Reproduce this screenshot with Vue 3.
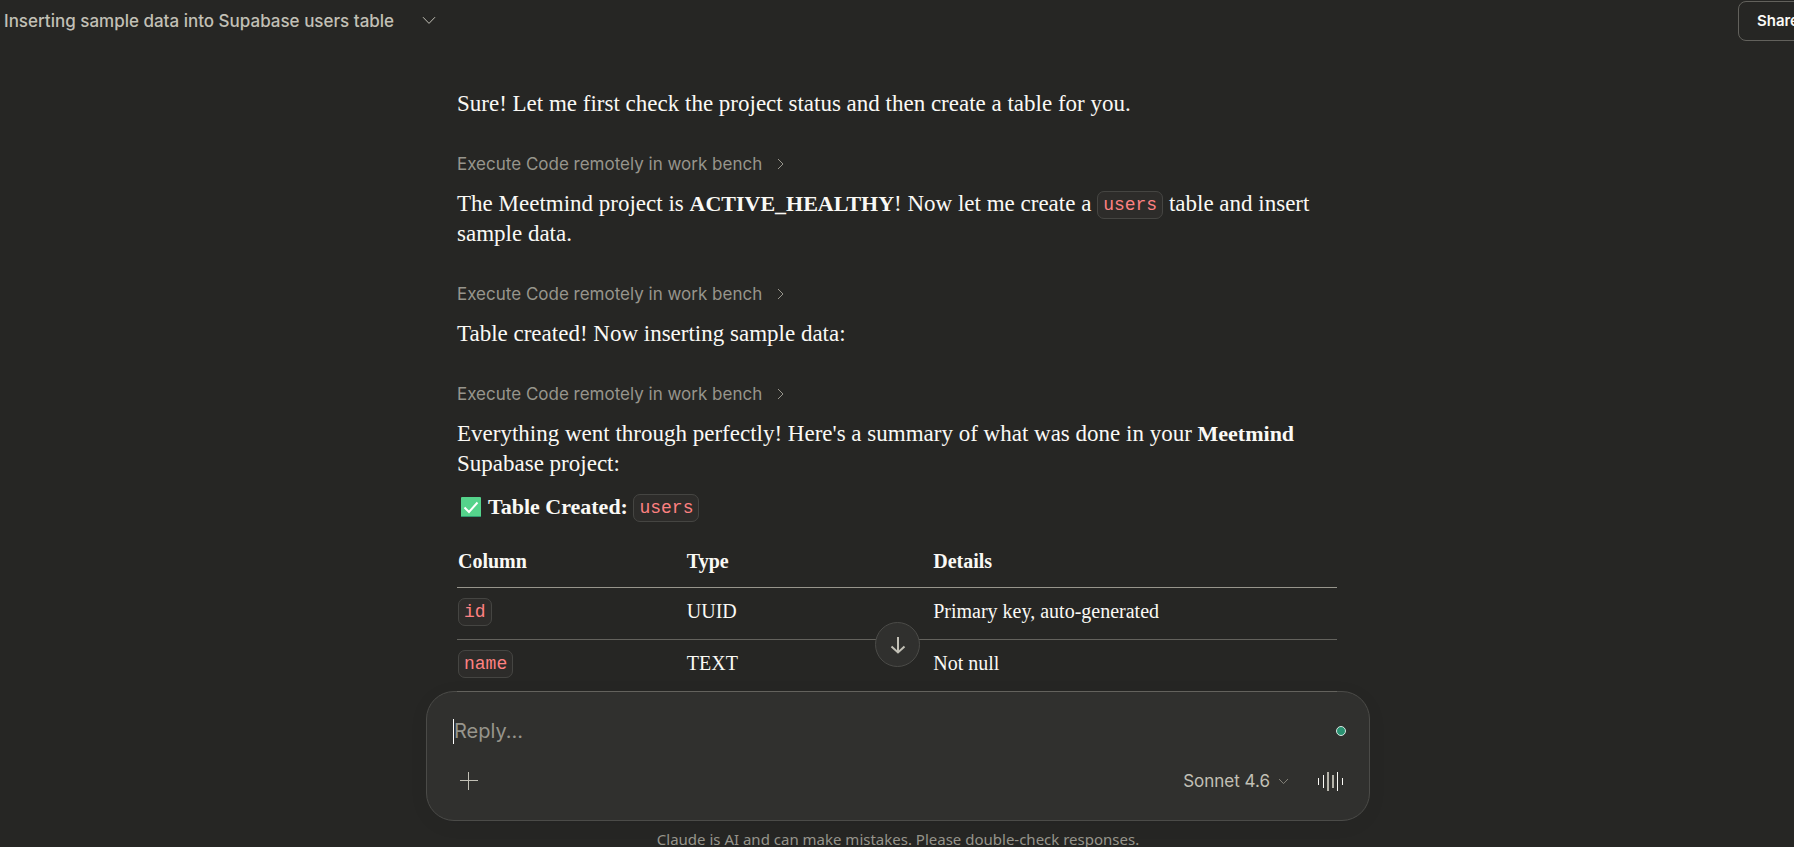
<script setup>
import { ref } from 'vue'

const reply = ref('')
const toolLabel = 'Execute Code remotely in work bench'
const rows = [
  { column: 'id', type: 'UUID', details: 'Primary key, auto-generated' },
  { column: 'name', type: 'TEXT', details: 'Not null' },
]
const bars = [
  { x: 0, w: 1, h: 7 },
  { x: 5, w: 1, h: 13 },
  { x: 9, w: 2, h: 19 },
  { x: 14, w: 2, h: 13 },
  { x: 19, w: 1, h: 19 },
  { x: 24, w: 1, h: 7 },
]
</script>

<template>
  <div class="page">
    <header class="topbar">
      <button class="title" type="button">
        <span>Inserting sample data into Supabase users table</span>
        <svg width="14" height="9" viewBox="0 0 14 9" aria-hidden="true">
          <path d="M1 1.2 7 7.4 13 1.2" />
        </svg>
      </button>
      <button class="share" type="button">Share</button>
    </header>

    <main class="thread">
      <div class="column">
        <p>Sure! Let me first check the project status and then create a table for you.</p>
        <button class="tool" type="button">
          {{ toolLabel }}
          <svg width="7" height="12" viewBox="0 0 7 12" aria-hidden="true"><path d="M1 1 6 6 1 11" /></svg>
        </button>
        <p>
          The Meetmind project is <strong>ACTIVE_HEALTHY</strong>! Now let me create a
          <code>users</code> table and insert sample data.
        </p>
        <button class="tool" type="button">
          {{ toolLabel }}
          <svg width="7" height="12" viewBox="0 0 7 12" aria-hidden="true"><path d="M1 1 6 6 1 11" /></svg>
        </button>
        <p>Table created! Now inserting sample data:</p>
        <button class="tool" type="button">
          {{ toolLabel }}
          <svg width="7" height="12" viewBox="0 0 7 12" aria-hidden="true"><path d="M1 1 6 6 1 11" /></svg>
        </button>
        <p>
          Everything went through perfectly! Here's a summary of what was done in your
          <strong>Meetmind</strong> Supabase project:
        </p>
        <h2>
          <svg class="check" width="20" height="20" viewBox="0 0 20 20" role="img" aria-label="Done">
            <rect width="20" height="20" rx="1" fill="#55d38b" />
            <path class="edge" d="M0 19.5H20" />
            <path class="tick" d="M3.5 10.5 8 15 16.5 5.5" />
          </svg>
          <span>Table Created: <code>users</code></span>
        </h2>
        <table>
          <thead>
            <tr>
              <th scope="col">Column</th>
              <th scope="col">Type</th>
              <th scope="col">Details</th>
            </tr>
          </thead>
          <tbody>
            <tr v-for="row in rows" :key="row.column">
              <td><code>{{ row.column }}</code></td>
              <td>{{ row.type }}</td>
              <td>{{ row.details }}</td>
            </tr>
          </tbody>
        </table>
      </div>
    </main>

    <footer class="dock">
      <button class="jump" type="button" aria-label="Scroll to bottom">
        <svg width="16" height="18" viewBox="0 0 16 18" aria-hidden="true">
          <path d="M8 1V16M1.5 10.5 8 16.5 14.5 10.5" />
        </svg>
      </button>
      <form class="composer" @submit.prevent>
        <div class="entry">
          <span class="caret"></span>
          <input v-model="reply" type="text" placeholder="Reply..." aria-label="Reply" />
          <span class="status"></span>
        </div>
        <div class="tools">
          <button class="icon add" type="button" aria-label="Add">
            <svg width="18" height="18" viewBox="0 0 18 18" aria-hidden="true"><path d="M8.5 0V18M0 8.5H18" /></svg>
          </button>
          <button class="model" type="button">
            Sonnet 4.6
            <svg width="11" height="7" viewBox="0 0 11 7" aria-hidden="true"><path d="M1 1 5.5 5.6 10 1" /></svg>
          </button>
          <button class="icon voice" type="button" aria-label="Voice mode">
            <svg width="26" height="19" viewBox="0 0 26 19" aria-hidden="true">
              <rect v-for="bar in bars" :key="bar.x" :x="bar.x" :y="(19 - bar.h) / 2" :width="bar.w" :height="bar.h" :fill="bar.w > 1 ? '#b5b3a9' : '#faf9f5'" />
            </svg>
          </button>
        </div>
      </form>
      <p class="note">Claude is AI and can make mistakes. Please double-check responses.</p>
    </footer>
  </div>
</template>

<style>
body {
  background: #262624;
}
</style>

<style scoped>
.page {
  display: flex;
  flex-direction: column;
  height: 100vh;
  overflow: hidden;
  background: #262624;
  color: #faf9f5;
  font-family: Inter, "Noto Sans", sans-serif;
}

button {
  padding: 0;
  border: 0;
  background: none;
  color: inherit;
  font: inherit;
  cursor: pointer;
}

svg path {
  fill: none;
  stroke: currentColor;
}

.topbar {
  display: flex;
  flex: none;
  justify-content: space-between;
  align-items: center;
  height: 41px;
  margin-right: -24px;
  padding-left: 4px;
}

.title {
  display: flex;
  align-items: center;
  gap: 28px;
  color: #c2c0b6;
  font-size: 17px;
  font-weight: 500;
}

.share {
  height: 40px;
  padding: 0 18px;
  border: 1px solid #62615c;
  border-radius: 8px;
  font-size: 15px;
  font-weight: 600;
}

.thread {
  position: relative;
  z-index: 1;
  flex: 1;
  min-height: 0;
  padding: 48px 24px 0;
  overflow: hidden;
  font-family: "Liberation Serif", serif;
  font-size: 23px;
  line-height: 30px;
}

.column {
  max-width: 880px;
  margin: 0 auto;
}

.column p {
  max-width: 872px;
  margin: 0;
}

.tool {
  display: flex;
  align-items: center;
  gap: 15px;
  height: 30px;
  margin: 30px 0 10px;
  color: #97958c;
  font-family: Inter, "Noto Sans", sans-serif;
  font-size: 17px;
}

strong {
  font-size: 22px;
  line-height: 1;
}

code {
  padding: 3px 5px;
  border: 1px solid #454542;
  border-radius: 7px;
  background: #2d2c2a;
  color: #fe8181;
  font-family: "Liberation Mono", monospace;
  font-size: 18px;
  font-weight: 400;
  line-height: 1;
  vertical-align: 1px;
}

h2 {
  display: flex;
  align-items: center;
  gap: 7px;
  height: 30px;
  margin: 13px 0 16px;
  padding-left: 4px;
  font-size: 22px;
  font-weight: 700;
}

.edge {
  stroke: #2f9a72;
}

.tick {
  stroke: #fff;
  stroke-width: 2;
}

table {
  width: 100%;
  border-collapse: collapse;
  table-layout: fixed;
  font-size: 20px;
}

th,
td {
  box-sizing: border-box;
  height: 52px;
  padding: 0 1px 4px;
  border-bottom: 1px solid #63625d;
  text-align: left;
}

th {
  height: 49px;
  padding-bottom: 2px;
  border-color: #97958c;
  font-weight: 700;
}

th:nth-child(1) {
  width: 26%;
}

th:nth-child(2) {
  width: 28%;
}

.dock {
  position: relative;
  flex: none;
  width: 944px;
  max-width: 100%;
  margin: -1px auto 0;
  padding-left: 2px;
}

.jump {
  display: grid;
  place-items: center;
  position: absolute;
  z-index: 2;
  top: -69px;
  left: calc(50% - 22px);
  width: 45px;
  height: 45px;
  border: 1px solid #4b4b48;
  border-radius: 50%;
  background: #30302e;
  color: #c2c0b6;
}

.jump path {
  stroke-width: 2;
}

.composer {
  padding: 22px 25px 23px;
  border: 1px solid #4b4b48;
  border-radius: 28px;
  background: #30302e;
  box-shadow: 0 4px 20px #0000000d;
}

.entry {
  display: flex;
  align-items: center;
  height: 34px;
  padding: 0 1px;
}

.caret {
  width: 1px;
  height: 25px;
  background: #fff;
}

input {
  flex: 1;
  min-width: 0;
  padding: 0;
  border: 0;
  outline: 0;
  background: none;
  color: #faf9f5;
  font: 20px Inter, "Noto Sans", sans-serif;
}

input::placeholder {
  color: #97958c;
  opacity: 1;
}

.status {
  width: 8px;
  height: 8px;
  margin-right: -3px;
  border: 1px solid #d5e6e0;
  border-radius: 50%;
  background: #2a9272;
}

.tools {
  display: flex;
  align-items: center;
  height: 32px;
  margin-top: 17px;
  color: #c2c0b6;
}

.icon {
  display: flex;
}

.add {
  margin: 0 auto 0 8px;
}

.model {
  display: flex;
  align-items: center;
  gap: 8px;
  margin-right: 29px;
  font-size: 17px;
}

.model svg {
  color: #85837b;
}

.note {
  height: 26px;
  margin: 0;
  overflow: hidden;
  color: #97958c;
  font-family: "Noto Sans", sans-serif;
  font-size: 15px;
  line-height: 36px;
  text-align: center;
}
</style>
